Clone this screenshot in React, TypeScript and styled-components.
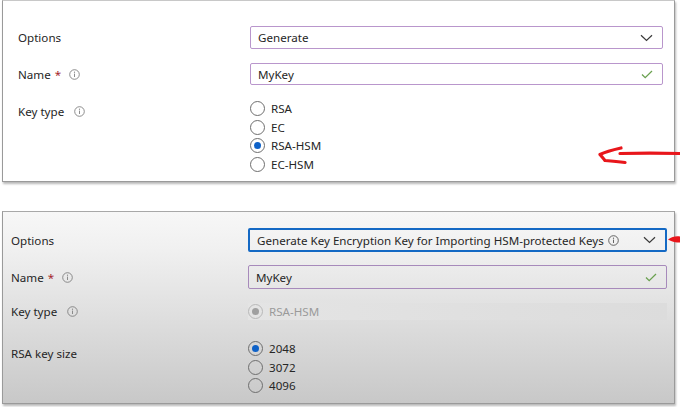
import React from "react";
import styled, { createGlobalStyle } from "styled-components";

const Global = createGlobalStyle`
  html, body { margin: 0; padding: 0; background: #ffffff; }
  body { font-family: "Noto Sans", "Open Sans", sans-serif; color: #242424; }
`;

const FS = 11.6;

const Page = styled.div`
  position: relative;
  width: 680px;
  height: 407px;
  overflow: hidden;
  display: flex;
  flex-direction: column;
  gap: 29px;
  padding-left: 2px;
  box-sizing: border-box;
`;

const Panel = styled.section<{ $dim?: boolean; $h: number; $pt: number; $pl: number; $pr: number }>`
  box-sizing: border-box;
  width: 673px;
  height: ${(p) => p.$h}px;
  border: 1px solid #9a9a9a;
  border-top-color: ${(p) => (p.$dim ? "#a8a8a8" : "#c8c8c8")};
  box-shadow: 1px 2px 2px rgba(0, 0, 0, 0.28);
  background: ${(p) => (p.$dim ? "linear-gradient(#f7f7f7, #f0f0f0 20%, #c8c8c8)" : "#ffffff")};
  padding: ${(p) => p.$pt}px ${(p) => p.$pr}px 0 ${(p) => p.$pl}px;
  display: flex;
  flex-direction: column;
`;

const Row = styled.div<{ $label: number; $h: number; $mb: number; $top?: boolean }>`
  display: grid;
  grid-template-columns: ${(p) => p.$label}px 1fr;
  align-items: ${(p) => (p.$top ? "start" : "center")};
  height: ${(p) => p.$h}px;
  margin-bottom: ${(p) => p.$mb}px;
`;

const Label = styled.div<{ $pt?: number }>`
  display: flex;
  align-items: center;
  font-size: ${FS}px;
  color: #262626;
  padding-top: ${(p) => p.$pt ?? 0}px;
`;

const Star = styled.span`
  color: #a4262c;
  margin-left: 4px;
  margin-right: 8px;
`;

const InfoWrap = styled.span<{ $ml?: number }>`
  display: inline-flex;
  margin-left: ${(p) => p.$ml ?? 0}px;
`;

const Info = ({ ml, c = "#808080" }: { ml?: number; c?: string }) => (
  <InfoWrap $ml={ml}>
    <svg width="11" height="11" viewBox="0 0 11 11">
      <circle cx="5.5" cy="5.5" r="4.8" fill="none" stroke={c} strokeWidth="0.9" />
      <line x1="5.5" y1="4.6" x2="5.5" y2="8" stroke={c} strokeWidth="0.9" />
      <circle cx="5.5" cy="3.2" r="0.6" fill={c} />
    </svg>
  </InfoWrap>
);

const Field = styled.div<{ $border: string; $h: number; $w?: number }>`
  box-sizing: border-box;
  height: ${(p) => p.$h}px;
  border: ${(p) => p.$w ?? 1.5}px solid ${(p) => p.$border};
  border-radius: 2px;
  display: flex;
  align-items: center;
  justify-content: space-between;
  padding: 0 9px 0 7px;
  font-size: ${FS}px;
  color: #262626;
  background: transparent;
`;

const FieldText = styled.span`
  display: inline-flex;
  align-items: center;
  gap: 4px;
  white-space: nowrap;
`;

const RadioList = styled.div<{ $step: number; $mt?: number }>`
  display: flex;
  flex-direction: column;
  margin-top: ${(p) => p.$mt ?? 0}px;
  & > * { height: ${(p) => p.$step}px; }
`;

const RadioRow = styled.label<{ $disabled?: boolean }>`
  display: flex;
  align-items: center;
  gap: 6px;
  font-size: ${FS}px;
  color: ${(p) => (p.$disabled ? "#9a9a9a" : "#262626")};
`;

const Circle = styled.span<{ $checked?: boolean; $disabled?: boolean }>`
  box-sizing: border-box;
  width: 15px;
  height: 15px;
  border-radius: 50%;
  border: 1px solid ${(p) => (p.$disabled ? "#b8b8b8" : "#6e6e6e")};
  display: inline-flex;
  align-items: center;
  justify-content: center;
  flex: none;
  &::after {
    content: "";
    display: ${(p) => (p.$checked ? "block" : "none")};
    width: 7px;
    height: 7px;
    border-radius: 50%;
    background: ${(p) => (p.$disabled ? "#a0a0a0" : "#0f62c8")};
  }
`;

const Band = styled.div`
  height: 17px;
  display: flex;
  align-items: center;
  background: linear-gradient(90deg, #e4e4e4, #dcdcdc);
`;

const Overlay = styled.svg`
  position: absolute;
  left: 0;
  top: 0;
  pointer-events: none;
`;

const Chevron = () => (
  <svg width="13" height="8" viewBox="0 0 13 8">
    <path d="M1 1.2 L6.5 6.5 L12 1.2" fill="none" stroke="#3a3a3a" strokeWidth="1.2" />
  </svg>
);

const Check = () => (
  <svg width="12" height="9" viewBox="0 0 12 9">
    <path d="M1 4.5 L4.2 7.6 L11 1" fill="none" stroke="#6aa150" strokeWidth="1.3" />
  </svg>
);

const Radio = ({ label, checked, disabled }: { label: string; checked?: boolean; disabled?: boolean }) => (
  <RadioRow $disabled={disabled}>
    <Circle $checked={checked} $disabled={disabled} />
    {label}
  </RadioRow>
);

export default function App() {
  return (
    <>
      <Global />
      <Page>
        <Panel $h={182} $pt={25} $pl={15} $pr={11}>
          <Row $label={232} $h={23} $mb={14}>
            <Label>Options</Label>
            <Field $border="#b996cc" $h={23}>
              <FieldText>Generate</FieldText>
              <Chevron />
            </Field>
          </Row>
          <Row $label={232} $h={22} $mb={14}>
            <Label>
              Name<Star>*</Star>
              <Info />
            </Label>
            <Field $border="#b996cc" $h={22}>
              <FieldText>MyKey</FieldText>
              <Check />
            </Field>
          </Row>
          <Row $label={232} $h={76} $mb={0} $top>
            <Label $pt={5}>
              Key type
              <Info ml={10} />
            </Label>
            <RadioList $step={18.7}>
              <Radio label="RSA" />
              <Radio label="EC" />
              <Radio label="RSA-HSM" checked />
              <Radio label="EC-HSM" />
            </RadioList>
          </Row>
        </Panel>

        <Panel $dim $h={193} $pt={16} $pl={8} $pr={7}>
          <Row $label={237} $h={24} $mb={13}>
            <Label>Options</Label>
            <Field $border="#1469c4" $h={24} $w={2}>
              <FieldText>
                Generate Key Encryption Key for Importing HSM-protected Keys
                <Info c="#555" />
              </FieldText>
              <Chevron />
            </Field>
          </Row>
          <Row $label={237} $h={24} $mb={14}>
            <Label>
              Name<Star>*</Star>
              <Info />
            </Label>
            <Field $border="#a78abb" $h={24}>
              <FieldText>MyKey</FieldText>
              <Check />
            </Field>
          </Row>
          <Row $label={237} $h={17} $mb={21}>
            <Label>
              Key type
              <Info ml={10} />
            </Label>
            <Band>
              <Radio label="RSA-HSM" checked disabled />
            </Band>
          </Row>
          <Row $label={237} $h={57} $mb={0} $top>
            <Label $pt={5}>RSA key size</Label>
            <RadioList $step={18.7} $mt={-2}>
              <Radio label="2048" checked />
              <Radio label="3072" />
              <Radio label="4096" />
            </RadioList>
          </Row>
        </Panel>

        <Overlay width="680" height="407" viewBox="0 0 680 407">
          <path
            d="M680 153.5 C660 153 640 153 620 153.5 M621 148 C612 150 605 152 600 154.5 C602 157 604 159 605 160.5 C612 161 618 161.5 625 162.5"
            fill="none"
            stroke="#e8161b"
            strokeWidth="3.2"
            strokeLinecap="round"
            strokeLinejoin="round"
          />
          <path d="M668 239.5 C672 236.5 676 236 680 236.5 L680 242.5 C676 242.5 672 242 668 239.5 Z" fill="#e8161b" />
        </Overlay>
      </Page>
    </>
  );
}
